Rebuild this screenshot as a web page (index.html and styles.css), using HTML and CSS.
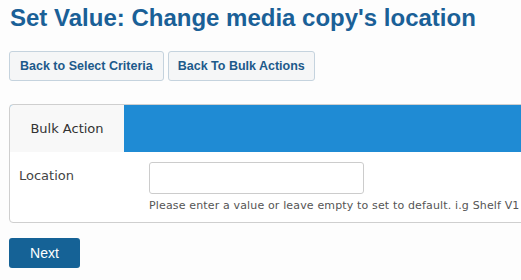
FILE: index.html
```html
<!DOCTYPE html>
<html>

<head>
  <meta charset="UTF-8">
  <title>Set Value</title>
  <link rel="stylesheet" href="styles.css">
</head>

<body>
  <h1 class="page-title">Set Value: Change media copy's location</h1>

  <div class="nav-buttons">
    <button class="nav-btn">Back to Select Criteria</button>
    <button class="nav-btn">Back To Bulk Actions</button>
  </div>

  <div class="panel">
    <div class="panel-tabs">
      <div class="tab active">Bulk Action</div>
    </div>
    <div class="panel-body">
      <div class="form-row">
        <label class="form-label" for="location">Location</label>
        <div class="form-field">
          <input type="text" id="location" class="text-input">
          <div class="help-text">Please enter a value or leave empty to set to default. i.g Shelf V1</div>
        </div>
      </div>
    </div>
  </div>

  <button class="next-btn">Next</button>
</body>

</html>
```

FILE: styles.css
```css
* {
  margin: 0;
  padding: 0;
  box-sizing: border-box;
}

body {
  font-family: Tahoma, "DejaVu Sans", sans-serif;
  background: #fdfdfd;
  padding: 0 9px;
  width: 560px;
  overflow: hidden;
}

/* 页面标题 */
.page-title {
  font-family: "Liberation Sans", Arial, sans-serif;
  font-size: 24px;
  font-weight: bold;
  color: #1a6097;
  line-height: 34px;
  padding-top: 1px;
  padding-left: 1px;
}

/* 返回按钮 */
.nav-buttons {
  display: flex;
  gap: 4px;
  margin-top: 16px;
}

.nav-btn {
  height: 30px;
  padding: 0 10px;
  background: #f5f6f7;
  border: 1px solid #c5d3de;
  border-radius: 3px;
  color: #1d5a8b;
  font-family: "Liberation Sans", Arial, sans-serif;
  font-size: 12.5px;
  font-weight: bold;
  cursor: pointer;
}

.nav-btn + .nav-btn {
  padding: 0 9px;
}

/* 面板 */
.panel {
  margin-top: 23px;
  width: 540px;
  background: white;
  border: 1px solid #cfcfcf;
  border-radius: 4px;
  overflow: hidden;
}

.panel-tabs {
  display: flex;
  height: 47px;
  background: #1f8bd4;
}

.tab {
  width: 114px;
  display: flex;
  align-items: center;
  justify-content: center;
  background: #f8f8f8;
  color: #333;
  font-size: 13px;
}

.panel-body {
  padding: 10px 9px 8px;
}

.form-row {
  display: flex;
}

.form-label {
  width: 130px;
  padding-top: 6px;
  font-size: 13px;
  color: #444;
}

.text-input {
  display: block;
  width: 215px;
  height: 32px;
  border: 1px solid #ccc;
  border-radius: 3px;
  background: white;
}

.help-text {
  margin-top: 4px;
  font-size: 11px;
  letter-spacing: 0.15px;
  color: #555;
  white-space: nowrap;
  line-height: 16px;
}

/* 下一步按钮 */
.next-btn {
  margin-top: 15px;
  width: 71px;
  height: 30px;
  background: #156296;
  border: none;
  border-radius: 3px;
  color: white;
  font-family: "Liberation Sans", Arial, sans-serif;
  font-size: 14px;
  cursor: pointer;
}
```
